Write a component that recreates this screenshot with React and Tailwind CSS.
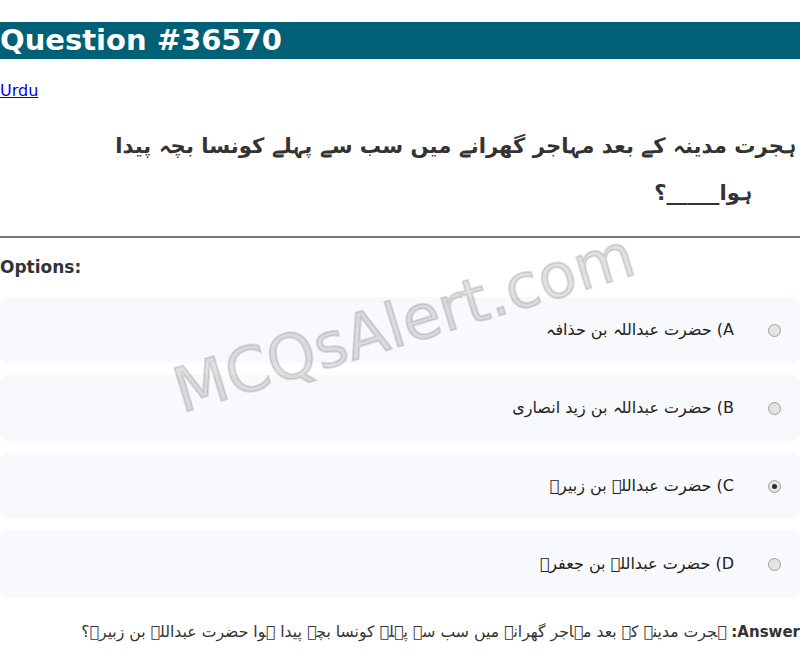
const options = [
  { key: "A", text: "حضرت عبداللہ بن حذافہ" },
  { key: "B", text: "حضرت عبداللہ بن زید انصاری" },
  { key: "C", text: "حضرت عبداللہ بن زبیرؓ" },
  { key: "D", text: "حضرت عبداللہ بن جعفرؓ" },
];

function Radio({ checked }) {
  return (
    <span className="flex h-[13px] w-[13px] shrink-0 items-center justify-center rounded-full border border-[#9f9f9f] bg-[#e4e4e4]">
      {checked && <span className="h-[5px] w-[5px] rounded-full bg-[#2b2b2b]" />}
    </span>
  );
}

export default function App() {
  const picked = "C";

  return (
    <div
      className="relative min-h-screen overflow-hidden bg-white pt-[22px]"
      style={{ fontFamily: '"DejaVu Sans", sans-serif' }}
    >
      {/* header */}
      <h1 className="h-[37px] bg-[#006075] text-[29px] font-bold leading-[37px] text-white">
        Question #36570
      </h1>

      <a href="#" className="mt-[20px] block w-fit text-[16px] leading-[24px] text-[#0000ee] underline">
        Urdu
      </a>

      {/* question */}
      <p dir="rtl" className="mt-[19px] pr-[4px] text-right text-[21.2px] font-bold leading-[47px] text-[#333]">
        ہجرت مدینہ کے بعد مہاجر گھرانے میں سب سے پہلے کونسا بچہ پیدا
        <br />
        <span className="mr-[44px] inline-block">ہوا_____؟</span>
      </p>

      <hr className="mt-[20px] border-t-2 border-[#777]" />

      <div className="mt-[17px] text-[17px] font-bold leading-[24px] text-[#333]">Options:</div>

      {/* options */}
      <div className="mt-[18px] flex flex-col gap-[12px]">
        {options.map((o) => (
          <div
            key={o.key}
            dir="rtl"
            className="flex h-[66px] items-center gap-[34px] rounded-[8px] bg-[#f8f9fc] pr-[19px]"
          >
            <Radio checked={picked === o.key} />
            <span className="text-[16px] text-[#222]">
              {o.key}) {o.text}
            </span>
          </div>
        ))}
      </div>

      {/* answer */}
      <p dir="rtl" className="mt-[24px] text-right text-[15px] leading-[22px] text-[#333]">
        <b>Answer:</b>{" "}
        <span className="text-[15.7px]">
          ہجرت مدینہ کے بعد مہاجر گھرانے میں سب سے پہلے کونسا بچہ پیدا ہوا حضرت عبداللہ بن زبیرؓ؟
        </span>
      </p>

      {/* watermark */}
      <div className="pointer-events-none absolute left-[404px] top-[323px] -translate-x-1/2 -translate-y-1/2 -rotate-[17deg] whitespace-nowrap text-[62px] leading-none text-[rgba(0,0,0,0.12)] [-webkit-text-stroke:2px_rgba(0,0,0,0.12)]">
        MCQsAlert.com
      </div>
    </div>
  );
}
